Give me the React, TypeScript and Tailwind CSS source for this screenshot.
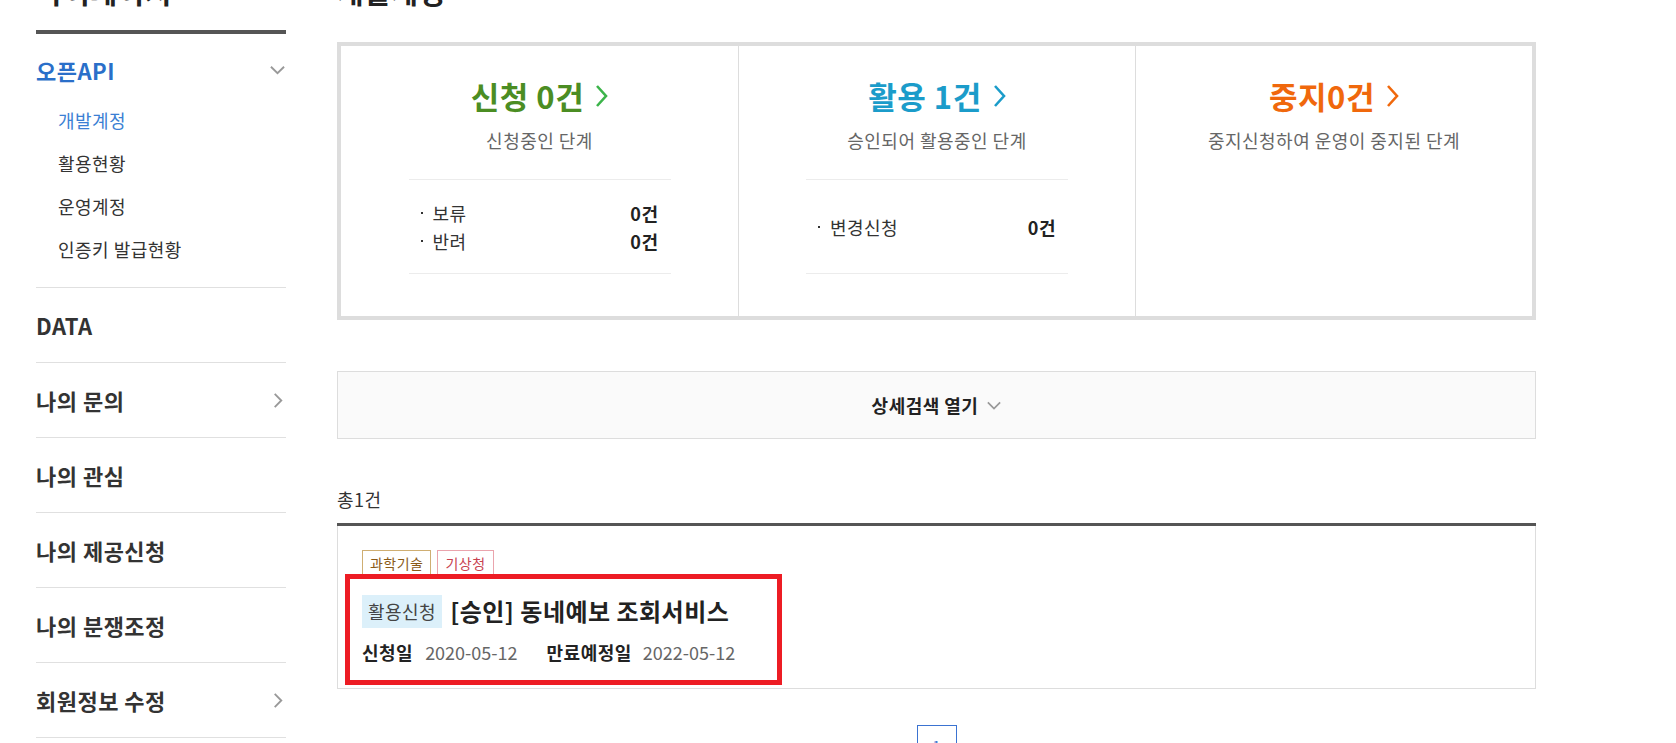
import type { ReactNode } from "react";

const font = "font-['Noto_Sans_CJK_KR','Noto_Sans',sans-serif] tracking-[0.03em]";

function ChevronRight({ className }: { className: string }) {
  return (
    <svg viewBox="0 0 13 24" className={className} fill="none">
      <polyline points="2,2 11,12 2,22" stroke="currentColor" strokeWidth="2.6" strokeLinejoin="miter" />
    </svg>
  );
}

function SmallChevron({ dir, className }: { dir: "down" | "right"; className: string }) {
  return dir === "down" ? (
    <svg viewBox="0 0 16 10" className={className} fill="none">
      <polyline points="1,1.5 8,8.5 15,1.5" stroke="currentColor" strokeWidth="2" />
    </svg>
  ) : (
    <svg viewBox="0 0 10 16" className={className} fill="none">
      <polyline points="1.5,1 8.5,8 1.5,15" stroke="currentColor" strokeWidth="2" />
    </svg>
  );
}

const subMenu = [
  { label: "개발계정", active: true },
  { label: "활용현황", active: false },
  { label: "운영계정", active: false },
  { label: "인증키 발급현황", active: false },
];

const menu = [
  { label: "DATA", arrow: false },
  { label: "나의 문의", arrow: true },
  { label: "나의 관심", arrow: false },
  { label: "나의 제공신청", arrow: false },
  { label: "나의 분쟁조정", arrow: false },
  { label: "회원정보 수정", arrow: true },
];

function Sidebar() {
  return (
    <aside className="ml-[36px] w-[250px] shrink-0">
      <h2 className="-mt-[23px] border-b-4 border-[#555] pb-[25px] text-[29px] font-bold leading-[28px] text-[#222]">
        마이페이지
      </h2>
      <div className="border-b border-[#e0e0e0] pb-[16px]">
        <div className="mt-[21px] flex h-[30px] items-center justify-between">
          <span className="text-[22px] font-bold leading-[30px] text-[#2a6fc9]">오픈API</span>
          <SmallChevron dir="down" className="mr-[1px] h-[10px] w-[15px] text-[#999]" />
        </div>
        <ul className="mt-[14px] pl-[22px]">
          {subMenu.map((s) => (
            <li
              key={s.label}
              className={`text-[18px] leading-[43px] ${s.active ? "text-[#3b7fd4]" : "text-[#333]"}`}
            >
              {s.label}
            </li>
          ))}
        </ul>
      </div>
      {menu.map((m) => (
        <div
          key={m.label}
          className="flex h-[75px] items-center justify-between border-b border-[#e0e0e0]"
        >
          <span className="text-[22px] font-bold text-[#333]">{m.label}</span>
          {m.arrow && <SmallChevron dir="right" className="mr-[3px] h-[15px] w-[10px] text-[#999]" />}
        </div>
      ))}
    </aside>
  );
}

type Item = { label: string; value: string };

function StatusColumn({
  title,
  titleColor,
  arrowColor,
  desc,
  items,
  first,
}: {
  title: string;
  titleColor: string;
  arrowColor: string;
  desc: string;
  items?: Item[];
  first?: boolean;
}) {
  return (
    <div className={`flex flex-col items-center pt-[32px] ${first ? "" : "border-l border-[#ddd]"}`}>
      <div className="flex items-center gap-[11px]">
        <span className={`text-[31px] font-bold leading-[36px] ${titleColor}`}>{title}</span>
        <ChevronRight className={`h-[24px] w-[13px] ${arrowColor}`} />
      </div>
      <p className="mt-[14px] text-[18px] leading-[24px] text-[#666]">{desc}</p>
      {items && (
        <div className="mt-[27px] flex h-[95px] w-[262px] flex-col justify-center border-y border-[#ececec] px-[12px]">
          {items.map((it) => (
            <div key={it.label} className="flex items-center justify-between text-[18px] leading-[28px] text-[#333]">
              <span className="flex items-center">
                <span className="inline-block h-[2px] w-[2px] bg-[#333]" />
                <span className="ml-[10px]">{it.label}</span>
              </span>
              <span className="font-bold text-[#222]">{it.value}</span>
            </div>
          ))}
        </div>
      )}
    </div>
  );
}

function Tag({ children, className }: { children: ReactNode; className: string }) {
  return (
    <span className={`inline-flex h-[27px] items-center border px-[7px] text-[14px] ${className}`}>{children}</span>
  );
}

export default function App() {
  return (
    <div className={`${font} flex min-h-screen overflow-hidden bg-white`}>
      <Sidebar />
      <main className="ml-[51px] w-[1199px] shrink-0">
        <h1 className="-mt-[23px] text-[29px] font-bold leading-[28px] text-[#222]">개발계정</h1>

        <section className="mt-[37px] grid h-[278px] grid-cols-3 border-4 border-[#ddd]">
          <StatusColumn
            first
            title="신청 0건"
            titleColor="text-[#4b8d23]"
            arrowColor="text-[#3cb44a]"
            desc="신청중인 단계"
            items={[
              { label: "보류", value: "0건" },
              { label: "반려", value: "0건" },
            ]}
          />
          <StatusColumn
            title="활용 1건"
            titleColor="text-[#1b9cca]"
            arrowColor="text-[#1b9cca]"
            desc="승인되어 활용중인 단계"
            items={[{ label: "변경신청", value: "0건" }]}
          />
          <StatusColumn
            title="중지0건"
            titleColor="text-[#f0680c]"
            arrowColor="text-[#f0680c]"
            desc="중지신청하여 운영이 중지된 단계"
          />
        </section>

        <button className="mt-[51px] flex h-[68px] w-full items-center justify-center gap-[9px] border border-[#ddd] bg-[#fafafa]">
          <span className="text-[18px] font-bold text-[#222]">상세검색 열기</span>
          <SmallChevron dir="down" className="h-[9px] w-[14px] text-[#999]" />
        </button>

        <p className="mt-[48px] text-[18px] leading-[24px] text-[#333]">총1건</p>

        <div className="relative mt-[12px] border-t-[3px] border-[#555]">
          <div className="border-x border-b border-[#ddd] px-[24px] pb-[24px] pt-[24px]">
            <div className="flex gap-[6px]">
              <Tag className="border-[#cfae72] text-[#8a5a17]">과학기술</Tag>
              <Tag className="border-[#eaa4ad] text-[#c7414f]">기상청</Tag>
            </div>
            <div className="mt-[16px] flex items-center gap-[8px]">
              <span className="inline-flex h-[33px] items-center bg-[#dcf0fa] px-[6px] text-[18px] text-[#444]">
                활용신청
              </span>
              <span className="text-[24px] font-bold tracking-[0.02em] text-[#222]">[승인] 동네예보 조회서비스</span>
            </div>
            <div className="mt-[11px] flex items-center text-[18px] leading-[24px]">
              <span className="font-bold text-[#222]">신청일</span>
              <span className="ml-[12px] tracking-normal text-[#666]">2020-05-12</span>
              <span className="ml-[29px] font-bold text-[#222]">만료예정일</span>
              <span className="ml-[11px] tracking-normal text-[#666]">2022-05-12</span>
            </div>
          </div>
          <div className="pointer-events-none absolute left-[8px] top-[48px] h-[111px] w-[437px] border-[5px] border-[#ed1c24]" />
        </div>

        <nav className="mt-[36px] flex justify-center">
          <span className="flex h-[40px] w-[40px] items-start justify-center border border-[#3b73d1] pt-[9px] text-[14px] leading-[20px] text-[#3b73d1]">
            1
          </span>
        </nav>
      </main>
    </div>
  );
}
